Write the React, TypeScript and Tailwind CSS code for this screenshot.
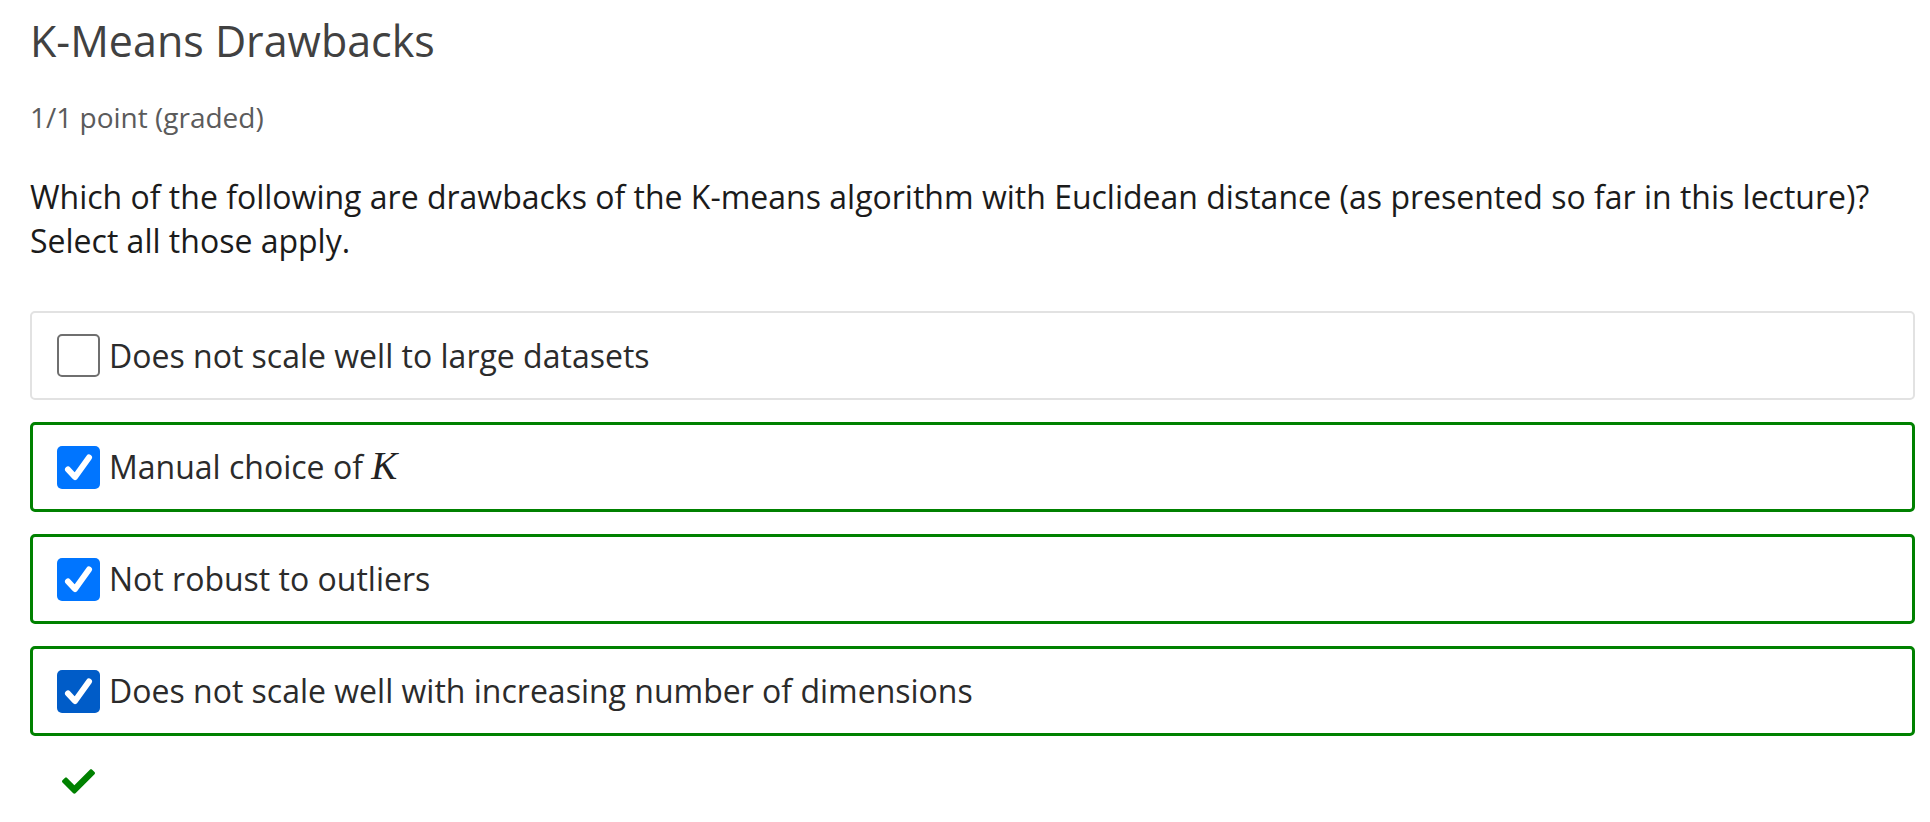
import { FaCheck } from "react-icons/fa";

type Choice = { label: React.ReactNode; checked: boolean; hover?: boolean };

const choices: Choice[] = [
  { label: "Does not scale well to large datasets", checked: false },
  {
    label: (
      <>
        Manual choice of{" "}
        <span className="font-['Liberation_Serif',serif] italic text-[39px] leading-none text-[#222]">K</span>
      </>
    ),
    checked: true,
  },
  { label: "Not robust to outliers", checked: true },
  { label: "Does not scale well with increasing number of dimensions", checked: true, hover: true },
];

function Box({ checked, hover }: { checked: boolean; hover?: boolean }) {
  if (!checked) {
    return <div className="w-[43px] h-[43px] shrink-0 rounded-[5px] border-2 border-[#6f6f6f] bg-white" />;
  }
  return (
    <div
      className={
        hover
          ? "w-[43px] h-[43px] shrink-0 rounded-[5px] bg-[#005cc8] flex items-center justify-center"
          : "w-[43px] h-[43px] shrink-0 rounded-[5px] bg-[#0075ff] flex items-center justify-center"
      }
    >
      <svg width="43" height="43" viewBox="0 0 43 43">
        <path d="M11 23.5 L18 31 L32 11.5" fill="none" stroke="white" strokeWidth="6" strokeLinecap="round" strokeLinejoin="round" />
      </svg>
    </div>
  );
}

export default function App() {
  return (
    <div className="min-h-screen bg-white pl-[30px] pr-[15px] pt-[15px] font-['Open_Sans',sans-serif]">
      <h2 className="text-[43px] leading-[52px] font-normal text-[#414141]">K-Means Drawbacks</h2>
      <div className="mt-[32px] text-[28px] leading-[36px] text-[#5b5b5b]">1/1 point (graded)</div>

      <p className="mt-[40px] text-[32px] leading-[44px] text-[#1b1b1b]">
        Which of the following are drawbacks of the K-means algorithm with Euclidean distance (as presented so far in this lecture)?
        <br />
        Select all those apply.
      </p>

      {/* Choices */}
      <div className="mt-[48px] flex flex-col gap-[22px]">
        {choices.map((c, i) => (
          <div
            key={i}
            className={
              c.checked
                ? "h-[90px] flex items-center pl-[24px] rounded-[5px] border-[3px] border-[#008100] bg-white"
                : "h-[89px] flex items-center pl-[25px] rounded-[5px] border-2 border-[#e2e2e2] bg-white"
            }
          >
            <Box checked={c.checked} hover={c.hover} />
            <span className="ml-[9px] text-[32px] leading-[44px] text-[#2b2b2b]">{c.label}</span>
          </div>
        ))}
      </div>

      <div className="mt-[29px] ml-[32px]">
        <FaCheck className="text-[#008100]" size={33} />
      </div>
    </div>
  );
}
